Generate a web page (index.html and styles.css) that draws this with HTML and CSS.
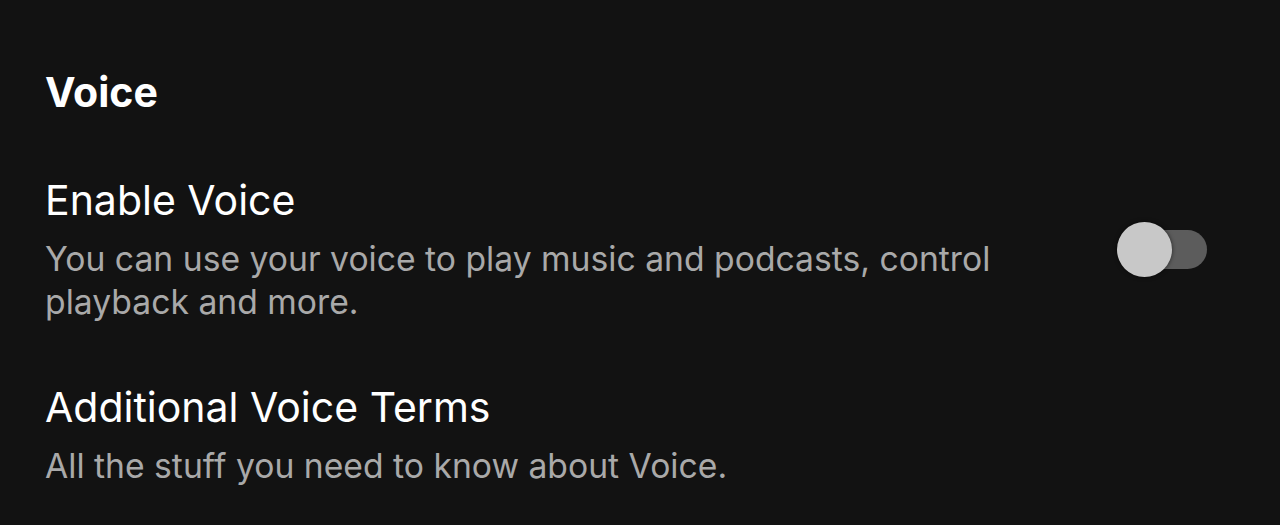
FILE: index.html
```html
<!DOCTYPE html>
<html lang="en">
<head>
  <meta charset="UTF-8">
  <title>Voice settings</title>
  <link rel="stylesheet" href="styles.css">
</head>
<body>
  <main class="settings">
    <h2 class="section-title">Voice</h2>

    <div class="setting-row">
      <div class="setting-text">
        <div class="setting-name">Enable Voice</div>
        <div class="setting-desc">You can use your voice to play music and podcasts, control playback and more.</div>
      </div>
      <div class="toggle">
        <div class="toggle-track"></div>
        <div class="toggle-thumb"></div>
      </div>
    </div>

    <div class="setting-row">
      <div class="setting-text">
        <div class="setting-name">Additional Voice Terms</div>
        <div class="setting-desc">All the stuff you need to know about Voice.</div>
      </div>
    </div>
  </main>
</body>
</html>
```

FILE: styles.css
```css
* {
  margin: 0;
  padding: 0;
  box-sizing: border-box;
}

body {
  background-color: #121212;
  color: #fff;
  font-family: 'Inter', 'Liberation Sans', sans-serif;
}

.settings {
  padding: 68px 73px 0 45px;
}

.section-title {
  font-size: 41px;
  font-weight: 700;
  line-height: 48px;
  margin-bottom: 59px;
}

.setting-row {
  display: flex;
  align-items: center;
  justify-content: space-between;
  margin-bottom: 59px;
}

.setting-text {
  max-width: 1000px;
}

.setting-name {
  font-size: 41px;
  line-height: 50px;
  margin-bottom: 12px;
}

.setting-desc {
  font-size: 33.7px;
  line-height: 43px;
  color: #a9a9a9;
}

/* Переключатель */
.toggle {
  position: relative;
  width: 90px;
  height: 55px;
  flex-shrink: 0;
}

.toggle-track {
  position: absolute;
  left: 3px;
  right: 0;
  top: 8px;
  height: 39px;
  border-radius: 20px;
  background-color: #5c5c5c;
}

.toggle-thumb {
  position: absolute;
  left: 0;
  top: 0;
  width: 55px;
  height: 55px;
  border-radius: 50%;
  background-color: #c8c8c8;
  box-shadow: 0 0 4px rgba(0, 0, 0, 0.6);
}
```
